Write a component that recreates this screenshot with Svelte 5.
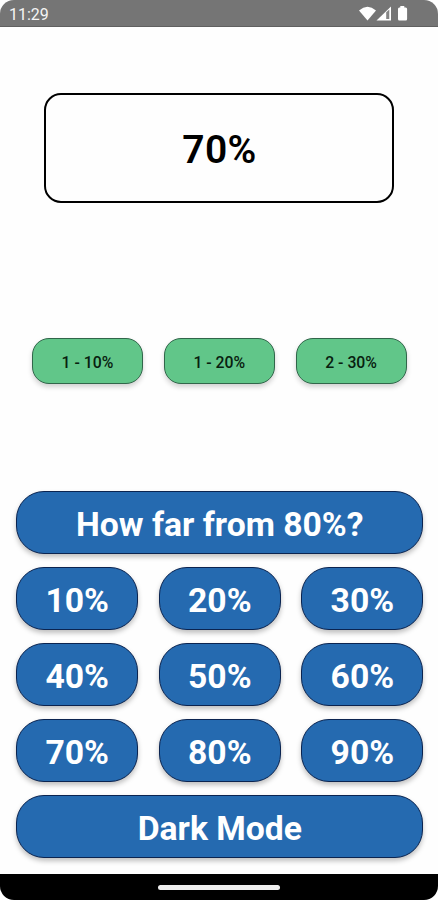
<script>
  let value = $state(70);
  const history = ['1 - 10%', '1 - 20%', '2 - 30%'];
  const amounts = [10, 20, 30, 40, 50, 60, 70, 80, 90];
</script>

<div class="phone">
  <header>
    <span class="time">11:29</span>
    <svg class="status" width="50" height="16" viewBox="0 0 50 16" aria-hidden="true">
      <path d="M0 4.4Q8.5 -2.8 17 4.4L8.5 14.6Z" fill="#fff" />
      <path d="M32 0.5V14.5H17.5Z" fill="#fff" />
      <path d="M27.2 6.2L30.3 3.5V13H27.2Z" fill="#858585" />
      <path d="M41.3 0H45.3V1.5H46.8Q48.1 1.5 48.1 3V13Q48.1 14.5 46.8 14.5H40.3Q39 14.5 39 13V3Q39 1.5 40.3 1.5H41.3Z" fill="#fff" />
    </svg>
  </header>

  <main>
    <div class="display"><span>{value}%</span></div>

    <div class="history">
      {#each history as entry}
        <button class="chip"><span>{entry}</span></button>
      {/each}
    </div>

    <div class="keypad">
      <button class="key wide"><span>How far from 80%?</span></button>
      {#each amounts as amount}
        <button class="key" onclick={() => (value = amount)}><span>{amount}%</span></button>
      {/each}
      <button class="key wide"><span>Dark Mode</span></button>
    </div>
  </main>

  <footer><div class="handle"></div></footer>
</div>

<style>
  :global(body) {
    margin: 0;
    background: #fff;
  }
  .phone {
    width: 438px;
    height: 900px;
    display: flex;
    flex-direction: column;
    overflow: hidden;
    border-radius: 14px;
    background: #fefefe;
    font-family: Roboto, sans-serif;
  }
  header {
    box-sizing: border-box;
    height: 27px;
    flex: none;
    display: flex;
    justify-content: space-between;
    padding: 6px 29px 0 9px;
    background: #757575;
    border-bottom: 1px solid #606060;
  }
  .time {
    font-size: 16px;
    line-height: 17px;
    color: #f4f4f4;
  }
  .status {
    display: block;
  }
  main {
    flex: 1;
    display: flex;
    flex-direction: column;
  }
  .display {
    box-sizing: border-box;
    width: 350px;
    height: 110px;
    margin: 66px 0 0 44px;
    display: flex;
    align-items: center;
    justify-content: center;
    border: 2px solid #000;
    border-radius: 17px;
    font-size: 39px;
    font-weight: 600;
    letter-spacing: 0.4px;
    color: #000;
  }
  .display span {
    padding: 4px 0 0 1px;
  }
  button {
    box-sizing: border-box;
    margin: 0;
    padding: 0;
    font-family: inherit;
    display: flex;
    align-items: center;
    justify-content: center;
  }
  .history {
    display: grid;
    grid-template-columns: repeat(3, 111px);
    column-gap: 20.8px;
    margin: 135px 0 0 32px;
  }
  .chip {
    height: 46px;
    border: 1px solid #31664a;
    border-radius: 17px;
    background: #61c689;
    box-shadow: 0 3px 5px rgba(0, 0, 0, 0.18);
    font-size: 15.8px;
    font-weight: 500;
    color: #08200f;
  }
  .chip span {
    padding-top: 2px;
  }
  .keypad {
    display: grid;
    grid-template-columns: repeat(3, 122px);
    grid-auto-rows: 63px;
    gap: 13.1px 20.6px;
    margin: 107px 0 0 16px;
  }
  .key {
    border: 1px solid #0b2450;
    border-radius: 28px;
    background: #256ab0;
    box-shadow: 0 3px 5px rgba(0, 0, 0, 0.25);
    font-size: 33.7px;
    font-weight: 700;
    color: #fff;
  }
  .key span {
    padding: 3.2px 0 0 0.4px;
  }
  .wide {
    grid-column: 1 / -1;
  }
  footer {
    height: 26px;
    flex: none;
    display: flex;
    justify-content: center;
    background: #000;
  }
  .handle {
    width: 122px;
    height: 5px;
    margin-top: 10.5px;
    border-radius: 3px;
    background: #eee;
  }
</style>
